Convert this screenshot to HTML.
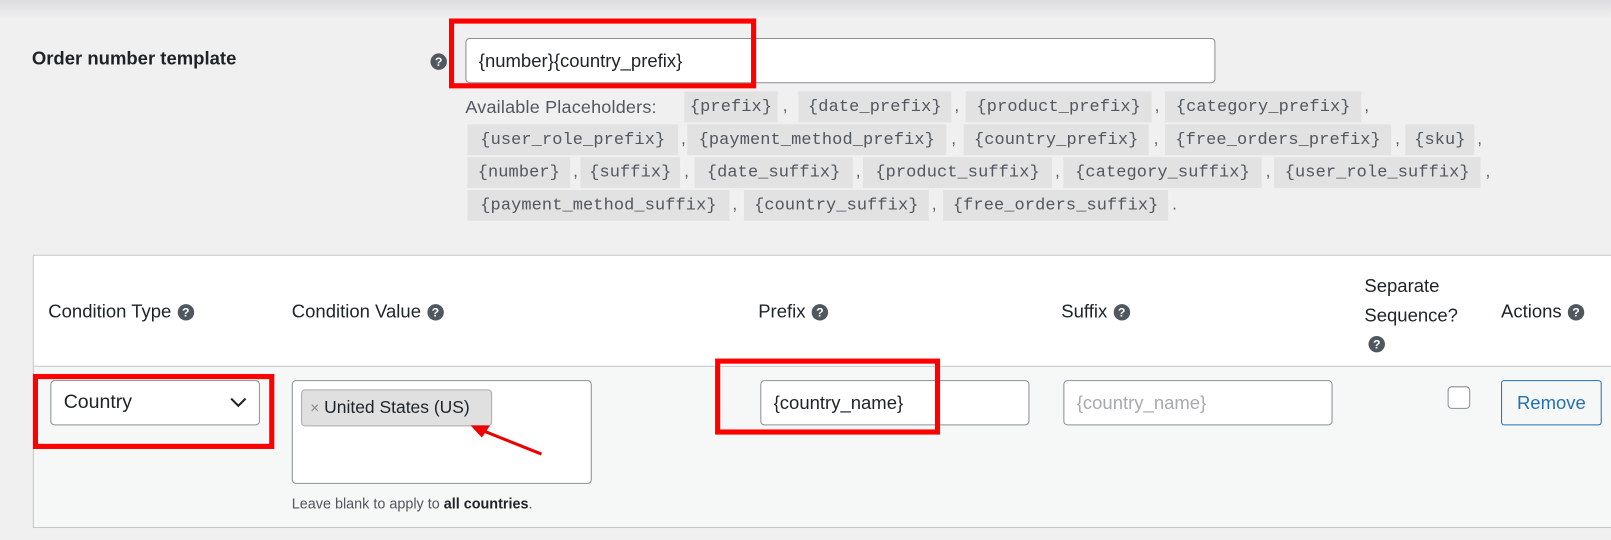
<!DOCTYPE html>
<html><head><meta charset="utf-8"><style>
*{margin:0;padding:0;box-sizing:border-box}
body{width:1611px;height:540px;background:#f0f0f1;font-family:"Liberation Sans",sans-serif;color:#1d2327;overflow:hidden}
#w{position:relative;width:1568px;height:526px;transform:scale(1.0274);transform-origin:0 0}
.a{position:absolute}
.top{left:0;top:0;width:1568px;height:18px;background:linear-gradient(#dcdcde,#f0f0f1)}
.q{display:inline-block;vertical-align:middle;width:16px;height:16px;border-radius:50%;background:#50575e;color:#fff;font:bold 12px/16px "Liberation Sans",sans-serif;text-align:center;margin-left:6px}
.a.q{position:absolute;margin:0}
.chip{position:absolute;height:30px;background:#e2e2e3;font:16.5px/30px "Liberation Mono",monospace;color:#50575e;text-align:center;white-space:nowrap;letter-spacing:.1px}
.cm{position:absolute;font:16px/30px "Liberation Sans",sans-serif;color:#50575e}
.red{position:absolute;border:5px solid #f00}
.in{position:absolute;background:#fff;border:1px solid #8c8f94;border-radius:4px;font-size:18px;line-height:42px;padding-left:12px}
.th{position:absolute;font-size:18px;color:#1d2327;white-space:nowrap}
</style></head><body><div id="w">
<div class="a top"></div>
<div class="a" style="left:31px;top:47px;font-size:18px;font-weight:bold">Order number template</div>
<div class="a q" style="left:419px;top:52px">?</div>
<div class="in" style="left:453px;top:37px;width:730px;height:44px;font-size:18px;line-height:42px">{number}{country_prefix}</div>
<div class="red" style="left:437px;top:18px;width:299px;height:68px"></div>
<div class="cm" style="left:453px;top:89px;font-size:17.5px;letter-spacing:.2px">Available Placeholders:</div>
<div class="chip" style="left:666px;top:89px;width:91px">{prefix}</div><div class="cm" style="left:762px;top:89px">,</div>
<div class="chip" style="left:777px;top:89px;width:149px">{date_prefix}</div><div class="cm" style="left:929px;top:89px">,</div>
<div class="chip" style="left:940px;top:89px;width:181px">{product_prefix}</div><div class="cm" style="left:1124px;top:89px">,</div>
<div class="chip" style="left:1134px;top:89px;width:191px">{category_prefix}</div><div class="cm" style="left:1328px;top:89px">,</div>
<div class="chip" style="left:455px;top:121px;width:205px">{user_role_prefix}</div><div class="cm" style="left:663px;top:121px">,</div>
<div class="chip" style="left:669px;top:121px;width:252px">{payment_method_prefix}</div><div class="cm" style="left:926px;top:121px">,</div>
<div class="chip" style="left:938px;top:121px;width:180px">{country_prefix}</div><div class="cm" style="left:1123px;top:121px">,</div>
<div class="chip" style="left:1134px;top:121px;width:220px">{free_orders_prefix}</div><div class="cm" style="left:1358px;top:121px">,</div>
<div class="chip" style="left:1368px;top:121px;width:67px">{sku}</div><div class="cm" style="left:1438px;top:121px">,</div>
<div class="chip" style="left:455px;top:153px;width:100px">{number}</div><div class="cm" style="left:558px;top:153px">,</div>
<div class="chip" style="left:565px;top:153px;width:97px">{suffix}</div><div class="cm" style="left:666px;top:153px">,</div>
<div class="chip" style="left:676px;top:153px;width:154px">{date_suffix}</div><div class="cm" style="left:833px;top:153px">,</div>
<div class="chip" style="left:840px;top:153px;width:184px">{product_suffix}</div><div class="cm" style="left:1027px;top:153px">,</div>
<div class="chip" style="left:1035px;top:153px;width:193px">{category_suffix}</div><div class="cm" style="left:1232px;top:153px">,</div>
<div class="chip" style="left:1240px;top:153px;width:201px">{user_role_suffix}</div><div class="cm" style="left:1446px;top:153px">,</div>
<div class="chip" style="left:455px;top:185px;width:255px">{payment_method_suffix}</div><div class="cm" style="left:713px;top:185px">,</div>
<div class="chip" style="left:724px;top:185px;width:180px">{country_suffix}</div><div class="cm" style="left:907px;top:185px">,</div>
<div class="chip" style="left:918px;top:185px;width:219px">{free_orders_suffix}</div><div class="cm" style="left:1141px;top:185px">.</div>

<div class="a" style="left:32px;top:248px;width:1600px;height:266px;border:1px solid #c3c4c7;background:#f6f7f7"></div>
<div class="a" style="left:33px;top:249px;width:1600px;height:108px;background:#fff;border-bottom:1px solid #c3c4c7"></div>
<div class="th" style="left:47px;top:293px">Condition Type<span class="q">?</span></div>
<div class="th" style="left:284px;top:293px">Condition Value<span class="q">?</span></div>
<div class="th" style="left:738px;top:293px">Prefix<span class="q">?</span></div>
<div class="th" style="left:1033px;top:293px">Suffix<span class="q">?</span></div>
<div class="th" style="left:1328px;top:264px;line-height:29px">Separate<br>Sequence?</div><div class="a q" style="left:1332px;top:327px">?</div>
<div class="th" style="left:1461px;top:293px">Actions<span class="q">?</span></div>

<div class="in" style="left:49px;top:370px;width:204px;height:44px;font-size:19px">Country</div>
<svg class="a" style="left:223px;top:386px" width="18" height="12"><path d="M2 2 L9 9 L16 2" stroke="#1d2327" stroke-width="2" fill="none"/></svg>
<div class="red" style="left:32px;top:364px;width:235px;height:73px"></div>
<div class="a" style="left:284px;top:370px;width:292px;height:101px;background:#fff;border:1px solid #8c8f94;border-radius:4px"></div>
<div class="a" style="left:293px;top:379px;height:36px;background:#e0e0e0;border:1px solid #aaa;border-radius:4px;width:186px;font-size:17px;line-height:34px;padding-left:8px;white-space:nowrap"><span style="color:#888;font-size:15px">×</span> United States (US)</div>
<svg class="a" style="left:455px;top:410px" width="80" height="40"><path d="M72 32 L12 8" stroke="#e00" stroke-width="3"/><path d="M3 4 L22 4 L14 16 Z" fill="#e00"/></svg>
<div class="a" style="left:284px;top:482px;font-size:14px;color:#50575e">Leave blank to apply to <b style="color:#1d2327">all countries</b>.</div>
<div class="in" style="left:740px;top:370px;width:262px;height:44px">{country_name}</div>
<div class="red" style="left:696px;top:349px;width:219px;height:74px"></div>
<div class="in" style="left:1035px;top:370px;width:262px;height:44px;color:#a7aaad">{country_name}</div>
<div class="a" style="left:1409px;top:376px;width:22px;height:22px;background:#fff;border:1px solid #8c8f94;border-radius:4px"></div>
<div class="a" style="left:1461px;top:370px;width:98px;height:44px;border:1px solid #2271b1;border-radius:3px;background:#f6f7f7;color:#2271b1;font-size:18px;line-height:42px;text-align:center">Remove</div>
</div></body></html>
